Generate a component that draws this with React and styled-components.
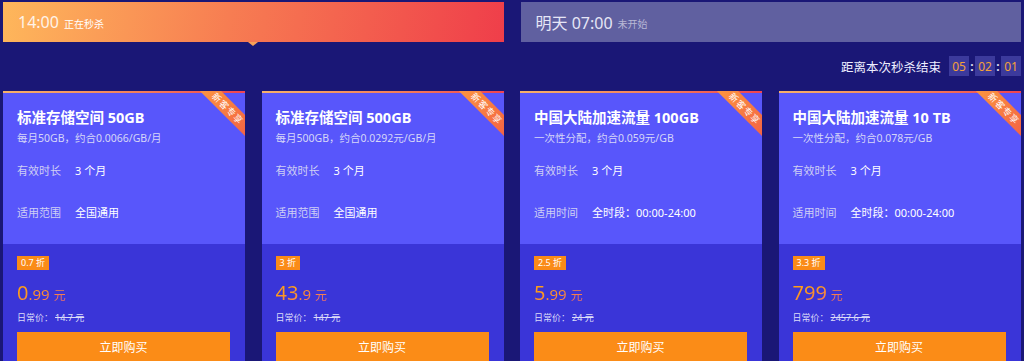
import React from "react";
import styled, { createGlobalStyle } from "styled-components";

const GlobalStyle = createGlobalStyle`
  body {
    margin: 0;
    background: #1a1776;
    font-family: "Noto Sans", "Noto Sans CJK SC", sans-serif;
    color: #fff;
  }
`;

const Page = styled.div`
  width: 1024px;
  height: 361px;
  overflow: hidden;
  padding: 2px 3px 0;
  box-sizing: border-box;
`;

const Tabs = styled.div`
  display: flex;
  gap: 17px;
`;

const Tab = styled.div`
  position: relative;
  flex: 1;
  height: 40px;
  display: flex;
  align-items: center;
  padding-left: 15px;
  gap: 5px;
  background: ${({ active }) =>
    active ? "linear-gradient(100deg, #feb75b 0%, #f77d52 45%, #ef3e4a 100%)" : "#6060a0"};

  &::after {
    content: "";
    display: ${({ active }) => (active ? "block" : "none")};
    position: absolute;
    left: 50%;
    bottom: -4px;
    margin-left: -5px;
    border-left: 5px solid transparent;
    border-right: 5px solid transparent;
    border-top: 4px solid #f8a058;
  }
`;

const TabTime = styled.span`
  font-size: 16px;
  color: ${({ active }) => (active ? "#fff3e8" : "#e6e6f6")};
`;

const TabState = styled.span`
  font-size: 10px;
  margin-top: 2px;
  color: ${({ active }) => (active ? "#fff" : "#b8b8d6")};
`;

const Countdown = styled.div`
  display: flex;
  justify-content: flex-end;
  align-items: center;
  height: 20px;
  margin-top: 14px;
  font-size: 12.5px;
  color: #eef;
`;

const CountLabel = styled.span`
  margin-right: 8px;
`;

const CountBox = styled.span`
  width: 20px;
  height: 20px;
  display: flex;
  align-items: center;
  justify-content: center;
  background: #3c3a9c;
  color: #f4a13a;
  font-size: 12px;
`;

const Colon = styled.span`
  width: 6px;
  text-align: center;
  font-size: 12px;
  font-weight: bold;
  color: #dde;
`;

const Cards = styled.div`
  display: flex;
  gap: 16.5px;
  margin-top: 15px;
`;

const Card = styled.div`
  position: relative;
  width: 242px;
  flex-shrink: 0;
  overflow: hidden;
  background: #3a35d8;
  height: 300px;
`;

const CardTop = styled.div`
  background: #5856fb;
  height: 153px;
  box-sizing: border-box;
  padding: 14px 14px 0;
  border-top: 2px solid transparent;
  border-image: linear-gradient(90deg, #f7b26a, #f47a58 60%, #ee4350) 1;
`;

const Ribbon = styled.div`
  position: absolute;
  top: 10px;
  right: -24px;
  width: 82px;
  height: 15px;
  transform: rotate(45deg);
  background: linear-gradient(90deg, #fd9b3f, #f25c45);
  color: #fff;
  font-size: 9px;
  line-height: 15px;
  text-align: center;
  letter-spacing: 1px;
`;

const Title = styled.div`
  font-size: 14.5px;
  font-weight: bold;
  line-height: 20px;
`;

const Sub = styled.div`
  margin-top: 3px;
  font-size: 10.5px;
  color: #d6d6f8;
`;

const Row = styled.div`
  display: flex;
  font-size: 11px;
  margin-top: ${({ gap }) => gap}px;
`;

const RowLabel = styled.span`
  width: 58px;
  color: #cfcff4;
`;

const RowValue = styled.span`
  color: #fff;
`;

const CardBottom = styled.div`
  padding: 12px 15px 0 14px;
`;

const Badge = styled.div`
  width: max-content;
  background: #fa8b18;
  color: #fff;
  font-size: 9px;
  line-height: 14px;
  padding: 0 4px;
`;

const Price = styled.div`
  margin-top: 10px;
  display: flex;
  align-items: baseline;
  line-height: 26px;
  background: linear-gradient(160deg, #ff9d17 30%, #ec5f86 100%);
  -webkit-background-clip: text;
  background-clip: text;
  color: transparent;
  width: max-content;
`;

const PriceInt = styled.span`
  font-size: 20px;
`;

const PriceDec = styled.span`
  font-size: 15px;
`;

const Yuan = styled.span`
  font-size: 12px;
  margin-left: 4px;
`;

const Normal = styled.div`
  margin-top: 2px;
  font-size: 9px;
  color: #dcdcf8;

  s {
    margin-left: 2px;
  }
`;

const BuyButton = styled.button`
  display: block;
  width: 100%;
  height: 30px;
  margin-top: 8px;
  border: none;
  background: #fb8c17;
  color: #fff;
  font-family: inherit;
  font-size: 12px;
  cursor: pointer;
`;

const products = [
  {
    title: "标准存储空间 50GB",
    sub: "每月50GB，约合0.0066/GB/月",
    rangeLabel: "适用范围",
    range: "全国通用",
    off: "0.7 折",
    int: "0",
    dec: ".99",
    normal: "14.7 元",
  },
  {
    title: "标准存储空间 500GB",
    sub: "每月500GB，约合0.0292元/GB/月",
    rangeLabel: "适用范围",
    range: "全国通用",
    off: "3 折",
    int: "43",
    dec: ".9",
    normal: "147 元",
  },
  {
    title: "中国大陆加速流量 100GB",
    sub: "一次性分配，约合0.059元/GB",
    rangeLabel: "适用时间",
    range: "全时段：00:00-24:00",
    off: "2.5 折",
    int: "5",
    dec: ".99",
    normal: "24 元",
  },
  {
    title: "中国大陆加速流量 10 TB",
    sub: "一次性分配，约合0.078元/GB",
    rangeLabel: "适用时间",
    range: "全时段：00:00-24:00",
    off: "3.3 折",
    int: "799",
    dec: "",
    normal: "2457.6 元",
  },
];

export default function App() {
  return (
    <Page>
      <GlobalStyle />
      <Tabs>
        <Tab active>
          <TabTime active>14:00</TabTime>
          <TabState active>正在秒杀</TabState>
        </Tab>
        <Tab>
          <TabTime>明天 07:00</TabTime>
          <TabState>未开始</TabState>
        </Tab>
      </Tabs>
      <Countdown>
        <CountLabel>距离本次秒杀结束</CountLabel>
        <CountBox>05</CountBox>
        <Colon>:</Colon>
        <CountBox>02</CountBox>
        <Colon>:</Colon>
        <CountBox>01</CountBox>
      </Countdown>
      <Cards>
        {products.map((p) => (
          <Card key={p.title}>
            <CardTop>
              <Title>{p.title}</Title>
              <Sub>{p.sub}</Sub>
              <Row gap={17}>
                <RowLabel>有效时长</RowLabel>
                <RowValue>3 个月</RowValue>
              </Row>
              <Row gap={26}>
                <RowLabel>{p.rangeLabel}</RowLabel>
                <RowValue>{p.range}</RowValue>
              </Row>
            </CardTop>
            <Ribbon>新客专享</Ribbon>
            <CardBottom>
              <Badge>{p.off}</Badge>
              <Price>
                <PriceInt>{p.int}</PriceInt>
                {p.dec && <PriceDec>{p.dec}</PriceDec>}
                <Yuan>元</Yuan>
              </Price>
              <Normal>
                日常价：<s>{p.normal}</s>
              </Normal>
              <BuyButton>立即购买</BuyButton>
            </CardBottom>
          </Card>
        ))}
      </Cards>
    </Page>
  );
}
